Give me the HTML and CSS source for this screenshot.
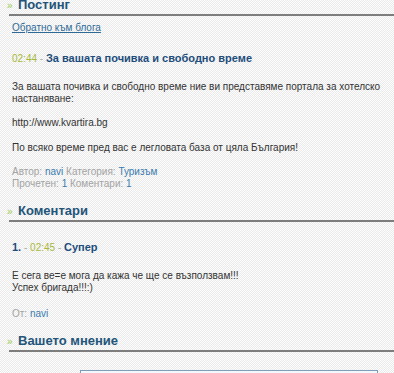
FILE: index.html
```html
<!DOCTYPE html>
<html lang="bg">
<head>
  <meta charset="UTF-8">
  <title>Постинг</title>
  <link rel="stylesheet" href="styles.css">
</head>
<body>
  <div class="page">
    <h2 class="section first"><span class="bullet">»</span>Постинг</h2>
    <div class="content">
      <a class="back" href="#">Обратно към блога</a>

      <div class="post-title"><span class="time">02:44</span> - <b>За вашата почивка и свободно време</b></div>

      <p class="text">За вашата почивка и свободно време ние ви представяме портала за хотелско настаняване:</p>
      <p class="text link-line">http://www.kvartira.bg</p>
      <p class="text">По всяко време пред вас е легловата база от цяла България!</p>

      <div class="meta">
        Автор: <a href="#">navi</a> Категория: <a href="#">Туризъм</a><br>
        Прочетен: <a href="#">1</a> Коментари: <a href="#">1</a>
      </div>
    </div>

    <h2 class="section"><span class="bullet">»</span>Коментари</h2>
    <div class="content">
      <div class="comment-title"><span class="num">1.</span> <span class="dash">-</span> <span class="time">02:45</span> <span class="dash">-</span> <b>Супер</b></div>
      <p class="text comment-text">Е сега ве=е мога да кажа че ще се възползвам!!!<br>Успех бригада!!!:)</p>
      <div class="meta author">От: <a href="#">navi</a></div>
    </div>

    <h2 class="section"><span class="bullet">»</span>Вашето мнение</h2>
    <form class="reply">
      <label class="field-label" for="title">Заглавие:</label>
      <input class="field" id="title" type="text">
    </form>
  </div>
</body>
</html>
```

FILE: styles.css
```css
body {
  margin: 0;
  font-family: 'Liberation Sans', Arial, sans-serif;
  font-size: 10px;
  color: #333;
  background: repeating-conic-gradient(#eaeaea 0 25%, #fdfdfd 0 50%) 0 0 / 2px 2px;
  overflow: hidden;
}
.page {
  margin-top: -3px;
}
.section {
  margin: 13px 0 0 9px;
  padding: 0;
  font-size: 13px;
  line-height: 16px;
  color: #235479;
  border-bottom: 2px solid #7d7d7d;
}
.section.first {
  margin-top: 0;
}
.bullet {
  display: inline-block;
  width: 11px;
  margin-left: -2px;
  color: #9ccc55;
  font-size: 10px;
  font-weight: normal;
}
.content {
  padding: 0 12px;
}
.back {
  display: inline-block;
  margin-top: 6px;
  line-height: 12px;
  color: #2f6a96;
}
.post-title {
  margin-top: 17px;
  line-height: 14px;
  color: #aaa;
}
.post-title b, .comment-title b {
  font-size: 11px;
  color: #1e4d7b;
}
.time {
  color: #a8b83c;
}
.text {
  margin: 13px 0 0;
  line-height: 12px;
  color: #333;
}
.post-title + .text {
  margin-top: 15px;
}
.link-line {
  margin-top: 12px;
}
.meta {
  margin-top: 12px;
  line-height: 12px;
  color: #a3a3a3;
}
.meta a {
  color: #3b7bae;
  text-decoration: none;
}
.comment-title {
  margin-top: 18px;
  line-height: 14px;
}
.num {
  font-weight: bold;
  font-size: 11px;
  color: #1e4d7b;
}
.dash {
  color: #aaa;
}
.comment-text {
  margin-top: 15px;
}
.meta.author {
  margin-top: 14px;
}
.reply {
  display: flex;
  align-items: flex-start;
  gap: 8px;
  margin-top: 18px;
  padding-left: 16px;
}
.field-label {
  width: 56px;
  margin-top: 2px;
  text-align: right;
  color: #555;
}
.field {
  box-sizing: border-box;
  width: 298px;
  height: 20px;
  padding: 0;
  border: 1px solid #7f9db9;
  background: #f2f8fb;
}
```
